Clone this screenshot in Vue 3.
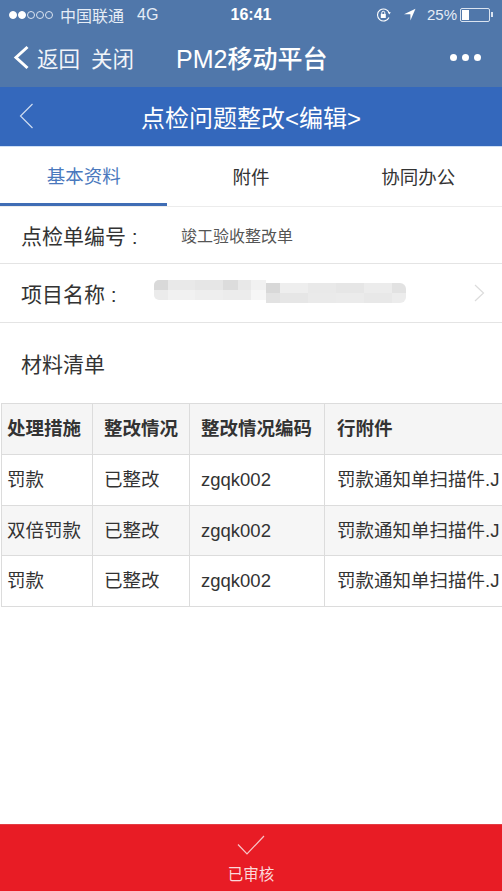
<script setup>
const tabs = ['基本资料', '附件', '协同办公']
const columns = ['处理措施', '整改情况', '整改情况编码', '行附件']
const rows = [
  { measure: '罚款', status: '已整改', code: 'zgqk002', file: '罚款通知单扫描件.J' },
  { measure: '双倍罚款', status: '已整改', code: 'zgqk002', file: '罚款通知单扫描件.J' },
  { measure: '罚款', status: '已整改', code: 'zgqk002', file: '罚款通知单扫描件.J' },
]
// mosaic over the project name, [width, colour]
const mosaicLeft = [
  [[14, '#d9d9d9'], [27, '#e9e9e9'], [28, '#e6e6e6'], [15, '#dcdcdc'], [13, '#e8e8e8'], [15, '#f1f1f1']],
  [[14, '#ebebeb'], [27, '#f1f1f1'], [28, '#eeeeee'], [28, '#ececec'], [15, '#f6f6f6']],
]
const mosaicRight = [
  [[14, '#d8d8d8'], [28, '#eeeeee'], [28, '#e9e9e9'], [28, '#e6e6e6'], [28, '#ececec'], [14, '#e2e2e2']],
  [[14, '#e2e2e2'], [28, '#e6e6e6'], [28, '#eaeaea'], [28, '#ebebeb'], [28, '#e8e8e8'], [14, '#ececec']],
]
</script>

<template>
  <div class="page">
    <div class="wechat-bar">
      <div class="status">
        <div class="status-left">
          <span class="dots">
            <i class="on"></i><i class="on"></i><i></i><i></i><i></i>
          </span>
          <span class="carrier">中国联通</span>
          <span class="net">4G</span>
        </div>
        <div class="clock">16:41</div>
        <div class="status-right">
          <svg class="lock" width="16" height="14" viewBox="0 0 16 14" fill="none" stroke="#fff">
            <path d="M13 9.5A6 6 0 1 1 13.2 5" stroke-width="1.1" />
            <path d="M14.8 4.2l-1.5 2.2-1.4-2.2z" fill="#fff" stroke="none" />
            <rect x="4.8" y="6" width="5" height="4" fill="#fff" stroke="none" />
            <path d="M5.8 6V4.8a1.5 1.5 0 0 1 3 0V6" stroke-width="1" />
          </svg>
          <svg class="arrow" width="13" height="13" viewBox="0 0 13 13">
            <path d="M12.5.8L7.4 12.4V6.2H1z" fill="#fff" />
          </svg>
          <span class="percent">25%</span>
          <span class="battery"><b></b></span>
          <span class="battery-tip"></span>
        </div>
      </div>
      <div class="nav">
        <svg class="nav-back" width="17" height="25" viewBox="0 0 17 25" fill="none">
          <path d="M14.5 2L3 12.5 14.5 23" stroke="#fff" stroke-width="3" />
        </svg>
        <span class="nav-link">返回</span>
        <span class="nav-link close">关闭</span>
        <span class="nav-title">PM2移动平台</span>
        <span class="more"><i></i><i></i><i></i></span>
      </div>
    </div>

    <header class="head">
      <svg class="head-back" width="15" height="26" viewBox="0 0 15 26" fill="none">
        <path d="M13.5 1L1.5 13l12 12" stroke="#cfdcf0" stroke-width="1.2" />
      </svg>
      <h1>点检问题整改&lt;编辑&gt;</h1>
    </header>

    <nav class="tabs">
      <div v-for="(tab, i) in tabs" :key="tab" class="tab" :class="{ active: i === 0 }">{{ tab }}</div>
    </nav>

    <div class="row first">
      <span class="label">点检单编号 :</span>
      <span class="value">竣工验收整改单</span>
    </div>
    <div class="row second">
      <span class="label">项目名称 :</span>
      <div class="mosaic">
        <div class="mosaic-part left">
          <div v-for="(line, i) in mosaicLeft" :key="i" class="patches">
            <i v-for="(p, j) in line" :key="j" :style="{ width: p[0] + 'px', background: p[1] }"></i>
          </div>
        </div>
        <div class="mosaic-part right">
          <div v-for="(line, i) in mosaicRight" :key="i" class="patches">
            <i v-for="(p, j) in line" :key="j" :style="{ width: p[0] + 'px', background: p[1] }"></i>
          </div>
        </div>
      </div>
      <svg class="chevron" width="11" height="18" viewBox="0 0 11 18" fill="none">
        <path d="M1 1l8.5 8L1 17" stroke="#dcdcdc" stroke-width="1.2" />
      </svg>
    </div>

    <div class="section-title">材料清单</div>

    <div class="table-wrap">
      <table>
        <colgroup>
          <col class="c1" /><col class="c2" /><col class="c3" /><col class="c4" />
        </colgroup>
        <thead>
          <tr>
            <th v-for="col in columns" :key="col">{{ col }}</th>
          </tr>
        </thead>
        <tbody>
          <tr v-for="(row, i) in rows" :key="i">
            <td>{{ row.measure }}</td>
            <td>{{ row.status }}</td>
            <td>{{ row.code }}</td>
            <td>{{ row.file }}</td>
          </tr>
        </tbody>
      </table>
    </div>

    <div class="audit">
      <svg width="28" height="21" viewBox="0 0 28 21" fill="none">
        <path d="M1 9.5L10 19 27 1" stroke="#f7c5c8" stroke-width="1.2" />
      </svg>
      <span>已审核</span>
    </div>
  </div>
</template>

<style scoped>
.page {
  position: relative;
  width: 502px;
  height: 891px;
  overflow: hidden;
  background: #fff;
  color: #333;
  font-family: "Liberation Sans", "Noto Sans CJK SC", sans-serif;
}

.wechat-bar {
  height: 87px;
  background: #5077aa;
  color: #fff;
}

.status {
  display: grid;
  grid-template-columns: 1fr auto 1fr;
  align-items: center;
  height: 29px;
  padding: 0 9px;
  font-size: 16px;
}
.status-left,
.status-right {
  display: flex;
  align-items: center;
}
.status-right {
  justify-content: flex-end;
}
.dots {
  display: flex;
  gap: 1px;
  margin-right: 7px;
}
.dots i {
  width: 8px;
  height: 8px;
  border: 1px solid #dbe4f0;
  border-radius: 50%;
  box-sizing: border-box;
}
.dots i.on {
  background: #fff;
  border-color: #fff;
}
.carrier {
  color: #e6edf6;
}
.net {
  margin-left: 13px;
  color: #e6edf6;
}
.clock {
  font-size: 16px;
  font-weight: 700;
}
.lock {
  margin-right: 11px;
}
.arrow {
  margin-right: 11px;
}
.percent {
  font-size: 15px;
  color: #e6edf6;
  margin-right: 3px;
}
.battery {
  display: block;
  width: 30px;
  height: 14px;
  border: 1px solid #dbe4f0;
  border-radius: 2px;
  box-sizing: border-box;
  padding: 1px;
}
.battery b {
  display: block;
  width: 7px;
  height: 100%;
  background: #fff;
}
.battery-tip {
  width: 2px;
  height: 5px;
  margin-left: 1px;
  background: #dbe4f0;
}

.nav {
  display: flex;
  align-items: center;
  height: 56px;
  padding-left: 13px;
}
.nav-link {
  font-size: 21.5px;
  margin-left: 7px;
  color: #f1f4f9;
}
.nav-link.close {
  margin-left: 11px;
}
.nav-title {
  margin-left: 42px;
  font-size: 25px;
  font-weight: 500;
}
.more {
  display: flex;
  gap: 5px;
  margin-left: auto;
  margin-right: 21px;
}
.more i {
  width: 7px;
  height: 7px;
  border-radius: 50%;
  background: #fff;
}

.head {
  position: relative;
  display: flex;
  align-items: center;
  justify-content: center;
  height: 60px;
  box-sizing: border-box;
  background: #3468bc;
  border-bottom: 1px solid #cfe0f5;
}
.head-back {
  position: absolute;
  left: 19px;
  top: 16px;
}
.head h1 {
  margin: 0;
  font-size: 24px;
  font-weight: 400;
  color: #fff;
}

.tabs {
  display: grid;
  grid-template-columns: repeat(3, 1fr);
  height: 60px;
  box-sizing: border-box;
  border-bottom: 1px solid #ececec;
}
.tab {
  display: flex;
  align-items: center;
  justify-content: center;
  padding-bottom: 2px;
  font-size: 18.5px;
  box-sizing: border-box;
}
.tab.active {
  color: #4a78bd;
  border-bottom: 3px solid #3f6db5;
  height: 59px;
  padding-top: 1px;
}

.row {
  display: flex;
  align-items: center;
  padding-left: 21px;
  border-bottom: 1px solid #e4e4e4;
  box-sizing: border-box;
}
.row.first {
  height: 57px;
}
.row.second {
  height: 59px;
}
.label {
  flex: none;
  font-size: 21px;
  color: #333;
}
.first .label {
  width: 160px;
}
.second .label {
  width: 133px;
}
.value {
  font-size: 16px;
  color: #555;
}

.mosaic {
  display: flex;
  align-items: flex-start;
  width: 252px;
}
.mosaic-part {
  overflow: hidden;
}
.mosaic-part.left {
  width: 112px;
  margin-top: -3px;
  border-radius: 5px 0 0 5px;
}
.mosaic-part.right {
  width: 140px;
  border-radius: 0 6px 6px 0;
}
.patches {
  display: flex;
  height: 10px;
}
.patches i {
  flex: none;
  display: block;
}
.chevron {
  margin-left: auto;
  margin-right: 17px;
}

.section-title {
  display: flex;
  align-items: center;
  height: 80px;
  padding-left: 21px;
  font-size: 21px;
}

.table-wrap {
  margin-left: 1px;
  overflow: hidden;
}
table {
  width: 501px;
  table-layout: fixed;
  border-collapse: collapse;
  font-size: 18.5px;
  line-height: 24px;
}
.c1 { width: 91px; }
.c2 { width: 97px; }
.c3 { width: 135px; }
.c4 { width: 178px; }
th,
td {
  height: 51px;
  padding: 0 5px;
  border: 1px solid #dcdcdc;
  text-align: left;
  white-space: nowrap;
  overflow: hidden;
  box-sizing: border-box;
  color: #333;
}
th {
  font-weight: 700;
  background: #f5f5f5;
}
th:not(:first-child),
td:not(:first-child) {
  padding-left: 11px;
}
th:last-child,
td:last-child {
  padding-left: 12px;
  padding-right: 0;
  border-right: none;
}
tbody tr:nth-child(2) td {
  height: 50px;
  background: #f6f6f6;
}

.audit {
  position: absolute;
  left: 0;
  right: 0;
  bottom: 0;
  height: 67px;
  display: flex;
  flex-direction: column;
  align-items: center;
  background: #e81c25;
  border-top: 1px solid #e23d44;
  color: #fbd9da;
  font-size: 15.5px;
  padding-top: 10px;
  box-sizing: border-box;
}
.audit span {
  margin-top: 8px;
  line-height: 22px;
}
</style>
